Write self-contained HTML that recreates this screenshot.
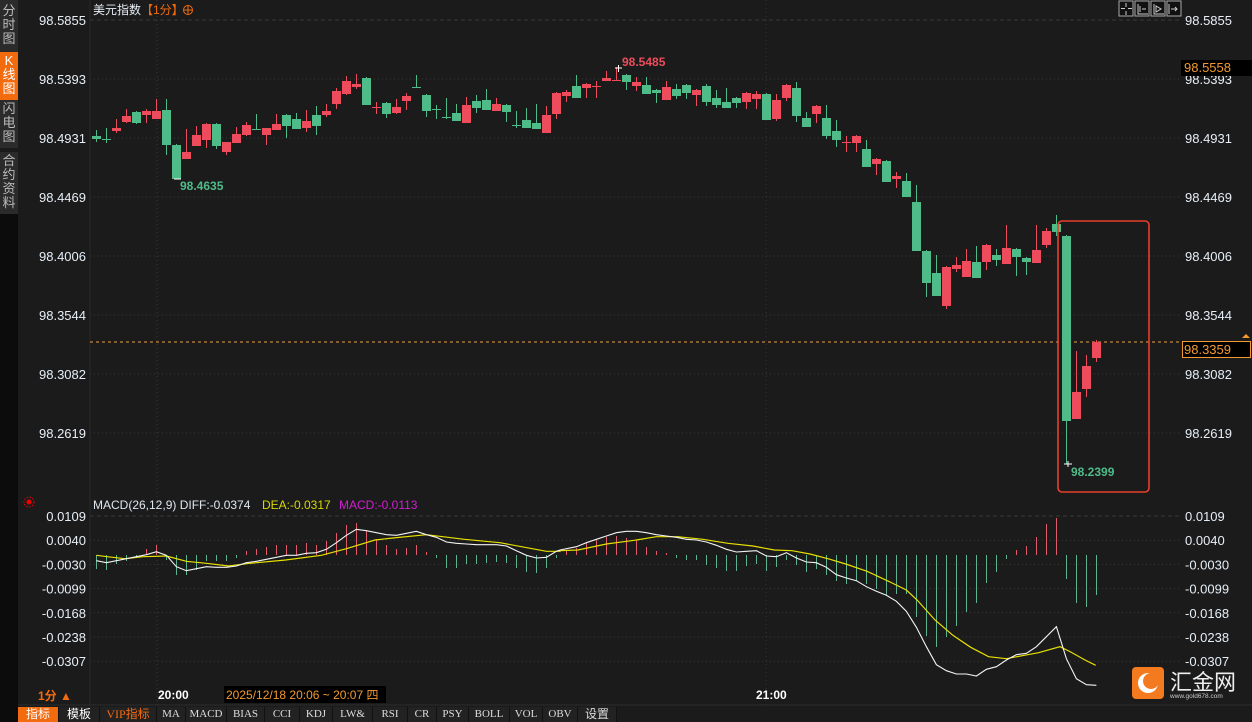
<!DOCTYPE html>
<html><head><meta charset="utf-8">
<style>
html,body{margin:0;padding:0;background:#1b1b1b;width:1252px;height:722px;overflow:hidden;font-family:"Liberation Sans","Noto Sans CJK SC",sans-serif;}
#wrap{position:relative;width:1252px;height:722px;}
svg{position:absolute;left:0;top:0;}
.side{position:absolute;left:0;width:18px;background:#2b2b2b;color:#bbb;font-size:13px;line-height:14px;text-align:center;}
.tab{position:absolute;top:707px;height:15px;font-size:11px;line-height:15px;text-align:center;color:#ddd;background:#222;border-right:1px solid #111;font-family:"Liberation Serif","Noto Sans CJK SC",serif;}
</style></head><body><div id="wrap">
<div class="side" style="top:0;height:48px;padding-top:4px;">分<br>时<br>图</div>
<div class="side" style="top:52px;height:46px;background:#f26b0f;color:#fff;padding-top:2px;">K<br>线<br>图</div>
<div class="side" style="top:100px;height:46px;padding-top:2px;">闪<br>电<br>图</div>
<div class="side" style="top:152px;height:60px;padding-top:2px;">合<br>约<br>资<br>料</div>
<div style="position:absolute;left:0;top:214px;width:18px;height:508px;background:#0c0c0c"></div>
<svg id="s" width="1252" height="722" xmlns="http://www.w3.org/2000/svg"></svg>
<div class="tab" style="left:18px;width:40px;background:#f26b0f;color:#fff;font-family:'Liberation Sans','Noto Sans CJK SC',sans-serif;font-size:12px">指标</div>
<div class="tab" style="left:59px;width:40px;color:#fff;font-family:'Liberation Sans','Noto Sans CJK SC',sans-serif;font-size:12px">模板</div>
<div class="tab" style="left:100px;width:56px;color:#f26b0f;font-size:12px">VIP指标</div>
<div class="tab" style="left:157px;width:28px">MA</div>
<div class="tab" style="left:186px;width:40px">MACD</div>
<div class="tab" style="left:227px;width:37px">BIAS</div>
<div class="tab" style="left:265px;width:34px">CCI</div>
<div class="tab" style="left:300px;width:32px">KDJ</div>
<div class="tab" style="left:333px;width:39px">LW&amp;</div>
<div class="tab" style="left:373px;width:34px">RSI</div>
<div class="tab" style="left:408px;width:28px">CR</div>
<div class="tab" style="left:437px;width:31px">PSY</div>
<div class="tab" style="left:469px;width:40px">BOLL</div>
<div class="tab" style="left:510px;width:32px">VOL</div>
<div class="tab" style="left:543px;width:34px">OBV</div>
<div class="tab" style="left:578px;width:38px;font-size:12px">设置</div>
</div>
<script>
var s=document.getElementById('s'),h='';
function T(x,y,t,c,sz,a,w){h+='<text x="'+x+'" y="'+y+'" fill="'+c+'" font-size="'+sz+'" text-anchor="'+(a||'start')+'"'+(w?' font-weight="bold"':'')+' font-family="Liberation Sans, Noto Sans CJK SC, sans-serif">'+t+'</text>';}
// price grid
var pl=['98.5855','98.5393','98.4931','98.4469','98.4006','98.3544','98.3082','98.2619'];
for(var k=0;k<8;k++){var y=20+k*59.0;h+='<line x1="90" x2="1180" y1="'+y+'" y2="'+y+'" stroke="#3a3a3a" stroke-dasharray="'+(k==0?'4,3':'1,3')+'"/>';T(86,y+5,pl[k],'#e6eef6',13,'end');T(1185,y+5,pl[k],'#e6eef6',13);}
var ml=['0.0109','0.0040','-0.0030','-0.0099','-0.0168','-0.0238','-0.0307'];
for(k=0;k<7;k++){y=516+k*24.2;h+='<line x1="90" x2="1180" y1="'+y+'" y2="'+y+'" stroke="#3a3a3a" stroke-dasharray="'+(k==0?'4,3':'1,3')+'"/>';T(86,y+5,ml[k],'#e6eef6',13,'end');T(1185,y+5,ml[k],'#e6eef6',13);}
h+='<line x1="157" x2="157" y1="0" y2="705" stroke="#3a3a3a" stroke-dasharray="1,3"/>';
h+='<line x1="766" x2="766" y1="0" y2="705" stroke="#333" stroke-dasharray="1,3"/>';
h+='<line x1="90" x2="90" y1="0" y2="705" stroke="#2a2a2a"/>';
h+='<line x1="18" x2="1252" y1="705" y2="705" stroke="#2e2e2e"/>';
// candles [o,c,h,l] in px, color g/r
var C=[[139,136,130,142,'g'],[139,139,128,143,'g'],[131,128,119,133,'r'],[122,116,109,123,'r'],[112,123,111,124,'g'],[115,111,109,123,'r'],[119,111,99,119,'r'],[110,145,99,155,'g'],[145,179,144,179,'g'],[159,152,129,159,'r'],[146,135,126,146,'r'],[140,124,123,148,'r'],[124,146,123,149,'g'],[152,142,142,155,'r'],[143,134,127,143,'r'],[135,125,122,136,'r'],[129,129,114,129,'g'],[135,128,128,145,'r'],[130,124,114,130,'r'],[115,126,114,138,'g'],[119,129,113,129,'g'],[128,121,110,132,'r'],[115,126,106,135,'g'],[115,111,104,117,'r'],[104,91,88,109,'r'],[94,81,76,95,'r'],[87,84,74,89,'r'],[78,105,77,105,'g'],[107,107,102,114,'r'],[103,114,102,118,'g'],[113,107,99,114,'r'],[101,96,93,110,'r'],[87,87,75,87,'g'],[95,111,94,117,'g'],[109,109,105,119,'g'],[117,117,98,119,'g'],[113,121,104,121,'g'],[123,105,97,123,'r'],[101,108,95,113,'g'],[100,110,89,110,'g'],[111,104,98,111,'r'],[105,112,104,122,'g'],
[125,125,111,128,'g'],[120,128,108,128,'g'],[123,129,104,129,'g'],[133,115,106,133,'r'],[114,93,92,119,'r'],[96,92,90,102,'r'],[86,98,75,98,'g'],[88,84,83,98,'r'],[86,86,81,98,'r'],[81,78,71,81,'r'],[80,80,67,80,'r'],[75,82,74,90,'g'],[86,82,77,91,'r'],[85,94,77,94,'g'],[90,93,89,103,'g'],[100,87,81,100,'r'],[89,96,84,99,'g'],[85,93,84,99,'g'],[95,90,89,106,'r'],[86,102,84,106,'g'],[98,105,90,108,'g'],[102,108,88,108,'g'],[98,103,97,108,'g'],[102,93,92,109,'r'],[99,94,91,109,'r'],[94,120,93,120,'g'],[119,100,94,121,'r'],[98,85,84,101,'r'],[88,116,82,122,'g'],[118,127,112,127,'g'],[114,106,105,123,'r'],[118,136,105,139,'g'],[131,140,120,147,'g'],[142,142,136,152,'r'],[143,136,135,152,'r'],[149,167,140,167,'g'],[164,159,158,175,'r'],[161,182,160,182,'g'],[179,176,172,188,'r'],[181,197,173,197,'g'],
[202,251,185,251,'g'],[251,283,250,297,'g'],[273,296,255,296,'g'],[306,267,266,309,'r'],[269,265,257,272,'r'],[277,261,249,277,'r'],[262,278,246,278,'g'],[262,245,244,270,'r'],[255,260,249,266,'g'],[264,248,225,264,'r'],[249,257,248,276,'g'],[258,262,257,275,'g'],[263,250,225,263,'r'],[245,231,228,248,'r'],[224,232,215,236,'g'],[236,421,235,464,'g'],[419,392,351,419,'r'],[389,366,355,397,'r'],[358,342,340,362,'r']];
var G='#4fbb89',R='#ee4c5c';
// dashed last price line
h+='<line x1="90" x2="1180" y1="342" y2="342" stroke="#e8a040" stroke-dasharray="3,3"/>';
for(var i=0;i<C.length;i++){var c=C[i],x=96+10*i,col=c[4]=='g'?G:R,t=Math.min(c[0],c[1]),b=Math.max(c[0],c[1]);
h+='<line x1="'+(x+0.5)+'" x2="'+(x+0.5)+'" y1="'+c[2]+'" y2="'+c[3]+'" stroke="'+col+'"/>';
if(b-t<1.5)h+='<rect x="'+(x-4)+'" y="'+t+'" width="9" height="1" fill="'+col+'"/>';else h+='<rect x="'+(x-4)+'" y="'+t+'" width="9" height="'+(b-t)+'" fill="'+col+'"/>';}
h+='<path d="M615 68h7M618.5 65v7M174 179h7M1064 464h8M1068 461v6" stroke="#fff"/>';
T(622,66,'98.5485',R,12,0,1);T(180,190,'98.4635',G,12,0,1);T(1071,476,'98.2399',G,12,0,1);
// red box
h+='<rect x="1058" y="221" width="91" height="271" rx="4" fill="none" stroke="#e8402a" stroke-width="1.6"/>';
// right labels
h+='<rect x="1181" y="60" width="71" height="16" fill="#000"/>';T(1184,72,'98.5558','#f29a30',13);
h+='<rect x="1182.5" y="341.5" width="68" height="16" fill="#000" stroke="#f29a30"/>';T(1184,354,'98.3359','#f29a30',13);
h+='<path d="M1242 338l4-4 4 4z" fill="#f29a30"/>';
// title
T(93,14,'美元指数','#e6eef6',12);T(141,14,'【1分】','#f26b0f',12);
h+='<circle cx="188" cy="10" r="4.5" fill="none" stroke="#f26b0f"/><path d="M183.5 10h9M188 5.5v9" stroke="#f26b0f"/>';
// top-right icons
for(k=0;k<4;k++){h+='<rect x="'+(1119+16*k)+'" y="1" width="14" height="15" fill="#111" stroke="#aaa"/>';}
h+='<path d="M1126 3v4M1126 11v4M1121 8.5h4M1128 8.5h4M1138 4v10h10M1140 6v6M1142 9h4M1154 4v10h10M1156 6v6l5-3zM1169 4v10M1171 9h6M1175 7l2 2-2 2" stroke="#ccc" fill="none"/>';
// MACD histogram
var Hv=[569,570,564,561,557,549,545,560,575,575,570,561,561,561,558,551,549,547,545,545,545,543,545,541,533,525,523,531,539,545,549,548,545,552,558,568,568,564,564,563,562,563,568,572,573,568,558,
551,548,542,540,537,536,538,540,547,551,553,558,560,560,565,568,571,571,566,564,571,567,560,565,572,569,575,581,584,581,584,589,595,594,594,617,636,647,637,626,612,603,583,572,559,550,546,537,524,518,579,603,607,595];
for(i=0;i<Hv.length;i++){x=96+10*i+0.5;var v=Hv[i];h+='<line x1="'+x+'" x2="'+x+'" y1="555" y2="'+v+'" stroke="'+(v<555?'#e05a6a':'#5fb490')+'"/>';}
function pl2(a,off,col){var p=[];for(var j=0;j<a.length;j+=2)p.push((off+a[j]/2.8).toFixed(1)+','+(490+a[j+1]/3).toFixed(1));return p.join(' ');}
var W7=[270,212,298,218,326,212,354,206,382,200,410,194,438,185,466,196,494,230,522,242,550,236,578,230,606,232,634,232,662,228,690,218,718,214,746,208,774,202,802,196,830,196,858,190,886,188,914,178,942,158,970,136,998,118,1026,122,1054,128,1082,134,1110,136,1138,130,1166,124,1194,134,1222,142,1250,156,1278,160,1306,162,1334,164,1362,164,1390,164,1418,168,1446,182,1474,196,1502,204,1530,202,1558,184];
var W8=[0,180,46,170,74,158,102,148,130,138,158,128,186,124,214,124,242,128,270,134,298,138,326,142,354,148,382,150,410,156,438,166,466,178,494,186,522,184,550,182,578,198,606,200,634,188,662,204,690,216,718,218,746,232,774,254,802,264,830,272,858,290,886,304,914,316,942,334,970,364,998,412,1026,470,1054,524,1082,542,1110,552,1138,552,1166,558,1194,538,1222,530,1250,510,1278,494,1306,490,1334,470,1362,440,1390,410,1418,506,1446,566,1474,584,1502,586];
var Y7=[270,196,300,200,350,206,400,200,466,198,522,214,578,220,640,228,700,220,800,210,900,196,970,176,1050,150,1100,144,1194,134,1300,148,1400,158,1530,184,1568,184];
var Y8=[0,182,50,180,130,162,214,150,270,140,330,140,400,148,470,160,540,168,600,180,650,182,700,192,750,206,800,222,860,244,920,274,970,300,1000,330,1050,390,1100,436,1150,472,1200,500,1250,506,1300,496,1340,488,1400,470,1430,486,1470,510,1500,526];
h+='<polyline points="'+pl2(Y7,0)+' '+pl2(Y8,560)+'" fill="none" stroke="#e8e000" stroke-width="1.2"/>';
h+='<polyline points="'+pl2(W7,0)+' '+pl2(W8,560)+'" fill="none" stroke="#f4f4f4" stroke-width="1.1"/>';
// MACD title
h+='<circle cx="29" cy="502" r="2.5" fill="#e00"/><circle cx="29" cy="502" r="5" fill="none" stroke="#e00" stroke-dasharray="1.5,1.5"/>';
T(93,509,'MACD(26,12,9) DIFF:-0.0374','#dfe8f0',12);T(262,509,'DEA:-0.0317','#d8d800',12);T(339,509,'MACD:-0.0113','#d020d0',12);
// time axis
T(38,700,'1分 ▲','#f26b0f',12,0,1);T(158,699,'20:00','#fff',12,0,1);T(756,699,'21:00','#fff',12,0,1);
h+='<rect x="224" y="686" width="162" height="17" fill="#000"/>';T(226,699,'2025/12/18 20:06 ~ 20:07 四','#f29a30',12);
// logo
h+='<rect x="1132" y="667" width="32" height="32" rx="4" fill="#f47a20"/><circle cx="1148" cy="683" r="10" fill="#fff"/><circle cx="1151" cy="681" r="8" fill="#f47a20"/>';
T(1170,690,'汇金网','#eee',22);T(1170,698,'www.gold678.com','#ccc',6.5);
s.innerHTML=h;
</script>
</body></html>
